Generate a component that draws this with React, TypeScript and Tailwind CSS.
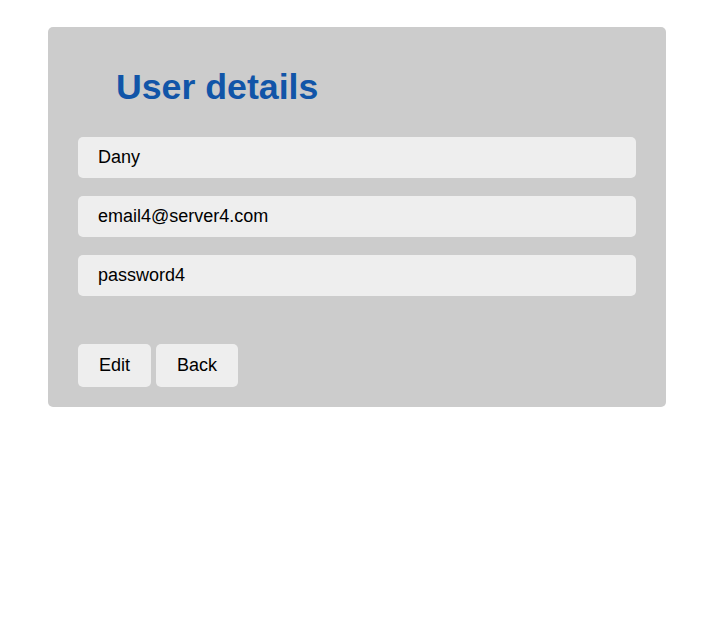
export default function App() {
  const fields = ['Dany', 'email4@server4.com', 'password4']

  return (
    <div className="min-h-screen bg-white pt-[27px] font-['Liberation_Sans',Arial,sans-serif]">
      <div className="mx-[48px] w-[618px] rounded-[5px] bg-[#cccccc] px-[30px] pt-[40px] pb-[20px]">
        <h1 className="ml-[38px] text-[35.7px] font-bold leading-[41px] text-[#1155a8]">User details</h1>

        <div className="mt-[29px] flex flex-col gap-[18px]">
          {fields.map((value, i) => (
            <div
              key={i}
              className="h-[41px] rounded-[5px] bg-[#eeeeee] px-[20px] text-[18px] leading-[41px] text-black"
            >
              {value}
            </div>
          ))}
        </div>

        <div className="mt-[48px] flex gap-[5px]">
          <button className="h-[43px] rounded-[5px] bg-[#eeeeee] px-[21px] text-[18px] text-black">Edit</button>
          <button className="h-[43px] rounded-[5px] bg-[#eeeeee] px-[21px] text-[18px] text-black">Back</button>
        </div>
      </div>
    </div>
  )
}
